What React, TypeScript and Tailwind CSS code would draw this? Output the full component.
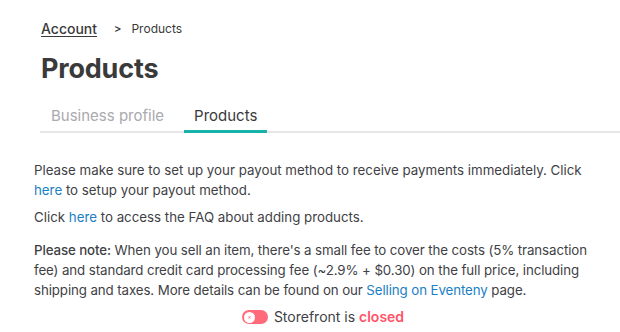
export default function App() {
  return (
    <div className="min-h-[332px] w-[620px] bg-white font-['Inter',sans-serif] text-[#3f3f46]">
      <div className="pl-[41px] pt-[18px]">
        <nav className="flex items-center text-[12px] text-[#3a3a3a]">
          <a className="text-[14px] font-medium underline underline-offset-2 text-[#3a3a3a]">Account</a>
          <span className="ml-[17px] mr-[10px] text-[11px] font-semibold">&gt;</span>
          <span>Products</span>
        </nav>
        <h1 className="mt-[13px] text-[27px] font-bold leading-[34px] tracking-[-0.2px] text-[#3a3a3a]">
          Products
        </h1>
      </div>
      <div className="ml-[40px] mt-[20px] flex border-b-2 border-[#e6e6e6]">
        <button className="px-[11px] pb-[5px] text-[15px] leading-[20px] text-[#a9a9ae]">Business profile</button>
        <button className="relative ml-[9px] px-[10px] pb-[5px] text-[15px] leading-[20px] text-[#3a3a3a]">
          Products
          <span className="absolute -bottom-[2px] left-0 right-0 h-[3px] bg-[#17b3aa]" />
        </button>
      </div>
      <div className="pl-[34px] pr-[8px] pt-[27px] text-[13.3px] leading-[20px] text-[#3f3f46]">
        <p>
          Please make sure to set up your payout method to receive payments immediately. Click
          <br />
          <a className="text-[#1a7fc4]">here</a> to setup your payout method.
        </p>
        <p className="mt-[7px]">
          Click <a className="text-[#1a7fc4]">here</a> to access the FAQ about adding products.
        </p>
        <p className="mt-[13px] tracking-[-0.1px]">
          <span className="font-medium">Please note:</span> When you sell an item, there's a small fee to cover the
          costs (5% transaction
          <br />
          fee) and standard credit card processing fee (~2.9% + $0.30) on the full price, including
          <br />
          shipping and taxes. More details can be found on our{" "}
          <a className="text-[#1a7fc4]">Selling on Eventeny</a> page.
        </p>
        <div className="mt-[7px] flex items-center justify-center gap-[6px]">
          <span className="flex h-[14px] w-[26px] items-center rounded-full bg-[#ff6b7b] pl-[2px]">
            <span className="flex h-[11px] w-[11px] items-center justify-center rounded-full bg-white text-[6px] leading-none text-[#ff6b7b]">
              ×
            </span>
          </span>
          <span className="text-[14px]">
            Storefront is <span className="font-semibold text-[#ff5468]">closed</span>
          </span>
        </div>
      </div>
    </div>
  );
}
